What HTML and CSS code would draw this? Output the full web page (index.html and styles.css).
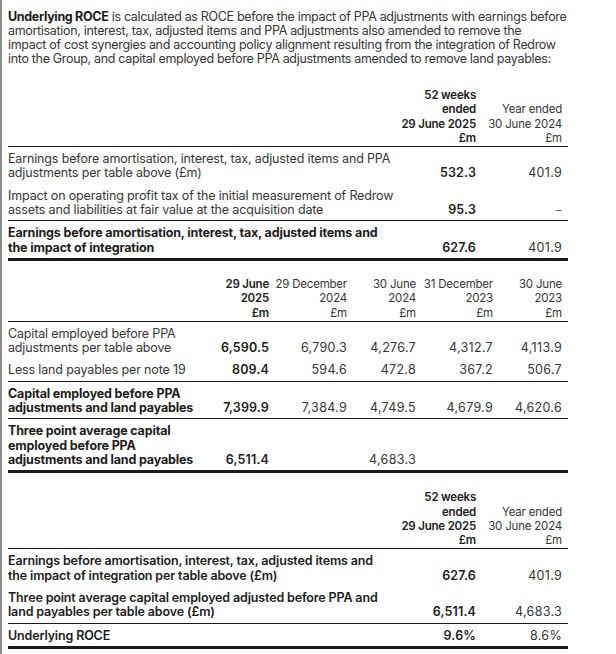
FILE: index.html
```html
<!DOCTYPE html>
<html lang="en">
<head>
<meta charset="utf-8">
<link rel="stylesheet" href="styles.css">
</head>
<body>
<div class="page">
  <p class="intro"><b>Underlying ROCE</b> is calculated as ROCE before the impact of PPA adjustments with earnings before<br>amortisation, interest, tax, adjusted items and PPA adjustments also amended to remove the<br>impact of cost synergies and accounting policy alignment resulting from the integration of Redrow<br>into the Group, and capital employed before PPA adjustments amended to remove land payables:</p>

  <table class="t t1">
    <colgroup><col class="c-label1"><col class="c-a"><col class="c-b"></colgroup>
    <thead>
      <tr><th></th><th class="cur">52 weeks<br>ended<br>29 June 2025<br>£m</th><th>Year ended<br>30 June 2024<br>£m</th></tr>
    </thead>
    <tbody>
      <tr><td>Earnings before amortisation, interest, tax, adjusted items and PPA<br>adjustments per table above (£m)</td><td class="cur">532.3</td><td>401.9</td></tr>
      <tr class="rule"><td>Impact on operating profit tax of the initial measurement of Redrow<br>assets and liabilities at fair value at the acquisition date</td><td class="cur">95.3</td><td class="dash">–</td></tr>
      <tr class="total"><td>Earnings before amortisation, interest, tax, adjusted items and<br>the impact of integration</td><td class="cur">627.6</td><td>401.9</td></tr>
    </tbody>
  </table>

  <table class="t t2">
    <colgroup><col class="c-label2"><col class="c1"><col class="c2"><col class="c3"><col class="c4"><col class="c5"></colgroup>
    <thead>
      <tr><th></th><th class="cur">29 June<br>2025<br>£m</th><th>29 December<br>2024<br>£m</th><th>30 June<br>2024<br>£m</th><th>31 December<br>2023<br>£m</th><th>30 June<br>2023<br>£m</th></tr>
    </thead>
    <tbody>
      <tr><td>Capital employed before PPA<br>adjustments per table above</td><td class="cur">6,590.5</td><td>6,790.3</td><td>4,276.7</td><td>4,312.7</td><td>4,113.9</td></tr>
      <tr class="rule"><td>Less land payables per note 19</td><td class="cur">809.4</td><td>594.6</td><td>472.8</td><td>367.2</td><td>506.7</td></tr>
      <tr class="rule strong"><td>Capital employed before PPA<br>adjustments and land payables</td><td class="cur">7,399.9</td><td>7,384.9</td><td>4,749.5</td><td>4,679.9</td><td>4,620.6</td></tr>
      <tr class="total"><td>Three point average capital<br>employed before PPA<br>adjustments and land payables</td><td class="cur">6,511.4</td><td></td><td>4,683.3</td><td></td><td></td></tr>
    </tbody>
  </table>

  <table class="t t3">
    <colgroup><col class="c-label3"><col class="c-a"><col class="c-b"></colgroup>
    <thead>
      <tr><th></th><th class="cur">52 weeks<br>ended<br>29 June 2025<br>£m</th><th>Year ended<br>30 June 2024<br>£m</th></tr>
    </thead>
    <tbody>
      <tr class="semi"><td>Earnings before amortisation, interest, tax, adjusted items and<br>the impact of integration per table above (£m)</td><td class="cur">627.6</td><td>401.9</td></tr>
      <tr class="semi rule"><td>Three point average capital employed adjusted before PPA and<br>land payables per table above (£m)</td><td class="cur">6,511.4</td><td>4,683.3</td></tr>
      <tr class="semi total"><td>Underlying ROCE</td><td class="cur">9.6%</td><td>8.6%</td></tr>
    </tbody>
  </table>
</div>
</body>
</html>
```

FILE: styles.css
```css
html, body {
  margin: 0;
  padding: 0;
  background: #ffffff;
}

body {
  font-family: Inter, "Noto Sans", "Liberation Sans", sans-serif;
  font-size: 12.5px;
  color: #363636;
}

.page {
  border-left: 2px solid #8a8a8a;
  padding: 10px 0 10px 6px;
  min-height: 634px;
}

.intro {
  margin: 0;
  width: 590px;
  line-height: 14px;
  letter-spacing: -0.32px;
  white-space: nowrap;
}

.intro b {
  color: #1c1c1c;
  font-weight: 700;
}

.t {
  border-collapse: collapse;
  table-layout: fixed;
  width: 560px;
  line-height: 14.3px;
  letter-spacing: -0.15px;
}

.t1 { margin-top: 22px; }
.t2 { margin-top: 16px; }
.t3 { margin-top: 17px; }

.c-label1 { width: 392px; }
.c-a { width: 82px; }
.c-b { width: 86px; }

.c-label2 { width: 197px; }
.c1 { width: 70px; }
.c2 { width: 78px; }
.c3 { width: 69px; }
.c4 { width: 77px; }
.c5 { width: 69px; }

.c-label3 { width: 392px; }

.t th {
  font-size: 11.5px;
  font-weight: 400;
  text-align: right;
  vertical-align: bottom;
  white-space: nowrap;
  padding: 0 6px 1px 0;
  border-bottom: 1.5px solid #1a1a1a;
  letter-spacing: -0.2px;
}

.t th.cur {
  font-weight: 600;
  color: #1c1c1c;
}

.t td {
  padding: 5px 6px 3px 0;
  vertical-align: bottom;
  text-align: right;
  white-space: nowrap;
  letter-spacing: 0.3px;
}

.t td:first-child {
  text-align: left;
  padding-right: 0;
  letter-spacing: -0.15px;
}

.t td.cur {
  font-weight: 600;
  color: #1c1c1c;
  letter-spacing: 0.15px;
}

.t td.dash {
  color: #777;
}

.rule td {
  border-bottom: 1.5px solid #1a1a1a;
}

.total td {
  border-bottom: 3px solid #1a1a1a;
}

.total td:first-child,
.strong td:first-child {
  font-weight: 700;
  color: #1c1c1c;
}

.semi td:first-child {
  font-weight: 600;
  color: #1c1c1c;
}

.t3 .total td:first-child {
  font-weight: 600;
}
```
